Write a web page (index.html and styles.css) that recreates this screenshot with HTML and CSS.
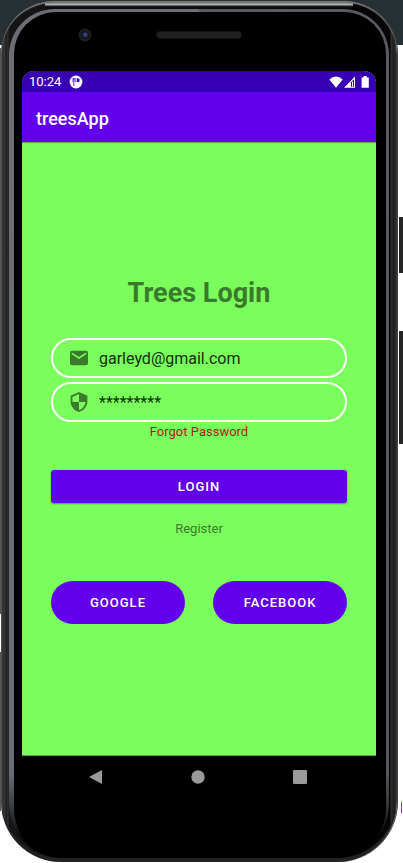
FILE: index.html
```html
<!DOCTYPE html>
<html lang="en">
<head>
<meta charset="utf-8">
<meta name="viewport" content="width=device-width, initial-scale=1">
<title>treesApp</title>
<link rel="stylesheet" href="styles.css">
</head>
<body>
<div class="side-key power-key"></div>
<div class="side-key volume-key"></div>
<div class="caret-mark"></div>
<div class="phone">
  <div class="ring">
    <div class="glass">
      <div class="bezel">
        <svg class="camera" width="14" height="14" viewBox="0 0 14 14" aria-hidden="true">
          <circle cx="7" cy="7" r="6.5" fill="#1d1e20"/>
          <circle cx="7" cy="7" r="4" fill="#10131f"/>
          <circle cx="7" cy="7" r="2.8" fill="#262d52"/>
          <circle cx="7.5" cy="6.5" r="1.2" fill="#46548a"/>
        </svg>
        <div class="speaker"></div>
      </div>
      <div class="screen">
        <div class="status">
          <span>10:24</span>
          <svg class="notice" width="14" height="14" viewBox="0 0 14 14" aria-hidden="true">
            <circle cx="7" cy="7" r="6.4" fill="#fff"/>
            <path d="M3.600 3.300h2.900v3.900h-1v3.400H4.300V7.200h-.7zM7.700 3.300h1.100a1.900 1.900 0 0 1 0 3.800H7.700z" fill="#3700b3"/>
            <path d="M4.700 4.300h.9v5h-.9z" fill="#fff"/>
          </svg>
          <svg class="signals" width="42" height="14" viewBox="0 0 42 14" aria-hidden="true">
            <path d="M.3 4.400Q7 -1.300 13.700 4.400L7 12.800z" fill="#fff"/>
            <path d="M15 12.800 26 1.600v11.200z" fill="#fff"/>
            <path d="M22 7.200 25 4.200v7.600h-3z" fill="#3700b3"/>
            <path d="M23 6.700h1v5.100h-1z" fill="#fff"/>
            <path d="M32.600 2.500h2V1h3.200v1.500h2v10.300h-7.200z" fill="#fff"/>
          </svg>
        </div>
        <header class="appbar">treesApp</header>
        <main class="content">
          <h1>Trees Login</h1>
          <form>
            <label class="field">
              <svg width="20" height="20" viewBox="0 0 20 20" role="img" aria-label="Email"><path d="M3 2.700h14a2 2 0 0 1 2 2v10.600a2 2 0 0 1-2 2H3a2 2 0 0 1-2-2V4.700a2 2 0 0 1 2-2zM2.800 4.600v1.700L10 10.900l7.200-4.600V4.600L10 9.100z"/></svg>
              <input type="email" value="garleyd@gmail.com">
            </label>
            <label class="field">
              <svg width="20" height="20" viewBox="2 2 20 20" role="img" aria-label="Password"><path d="M12 2 3.600 5.700v5.600c0 5.200 3.600 9.500 8.400 10.700 4.800-1.200 8.400-5.500 8.400-10.700V5.700zm0 10h6.500c-.5 3.800-3 7-6.500 8.100V12H5.500V6.900L12 4z"/></svg>
              <input type="text" value="*********" autocomplete="off">
            </label>
            <a class="forgot" href="#">Forgot Password</a>
            <button class="login" type="submit">LOGIN</button>
            <a class="register" href="#">Register</a>
            <div class="social">
              <button type="button">GOOGLE</button>
              <button type="button">FACEBOOK</button>
            </div>
          </form>
        </main>
      </div>
      <nav class="navbar">
        <button type="button" aria-label="Back"><svg width="16" height="16" viewBox="0 0 16 16"><path d="M1 8 14 1v14z"/></svg></button>
        <button type="button" aria-label="Home"><svg width="16" height="16" viewBox="0 0 16 16"><circle cx="8" cy="8" r="6.7"/></svg></button>
        <button type="button" aria-label="Overview"><svg width="16" height="16" viewBox="0 0 16 16"><rect x="1" y="1" width="14" height="14" rx="1.200"/></svg></button>
      </nav>
    </div>
  </div>
</div>
</body>
</html>
```
FILE: styles.css
```css
* { box-sizing: border-box; }

body {
  margin: 0;
  min-height: 100vh;
  padding: 1px 6px 1px 1px;
  display: flex;
  position: relative;
  overflow: hidden;
  background:
    linear-gradient(#fff, #fff) 0 614px / 1px 38px no-repeat,
    linear-gradient(#263035 45px, #fff 45px, #fff 48px, #555 48px, #555 811px, #fff 811px) 0 0 / 1px 100% no-repeat,
    linear-gradient(#263035 45px, #fff 45px);
  font-family: Roboto, "Liberation Sans", sans-serif;
}

.side-key {
  position: absolute;
  right: 0;
  width: 4px;
  background: #262626;
}
.power-key { top: 217px; height: 56px; }
.volume-key { top: 331px; height: 113px; }
.caret-mark {
  position: absolute;
  right: 1px;
  top: 802px;
  width: 1px;
  height: 11px;
  background: #9b2fae;
}

.phone {
  flex: 1;
  display: flex;
  position: relative;
  padding: 8px 8px 4px 8px;
  border-radius: 52px 52px 60px 60px;
  background:
    linear-gradient(#555 0, #666 2px, #c4c8c8 3px, #a0a4a4 4px, #222 5px, #050505 7px, transparent 8px) 50% 0 / calc(100% - 88px) 9px no-repeat,
    linear-gradient(90deg, #555 0, #2c2c2c 2px, #3a3a3a 4px, #181818 5px, #333 7px, #151515 8px, #111 50%, #050505 calc(100% - 8px), #050505 calc(100% - 7px), #303030 calc(100% - 6px), #1c1c1c calc(100% - 3px), #333 calc(100% - 1px), #222 100%);
  box-shadow: inset 0 2px 1px #777, inset 0 -4px 0 #222, 1px 0 0 #444;
}

.ring {
  flex: 1;
  display: flex;
  padding: 3px 3px 0 5px;
  border-radius: 46px 46px 54px 54px;
  background:
    linear-gradient(#5a5a60 0, #56565c 90%, #333 94%, #000 98%) 100% 0 / 50% 100% no-repeat,
    linear-gradient(#6d6d75 0, #686c75 90%, #3a3d42 94%, #000 98%);
}

.glass {
  flex: 1;
  display: flex;
  flex-direction: column;
  padding: 0 10px 0 8px;
  border-radius: 42px 42px 50px 50px;
  background: #000;
}

.bezel {
  height: 59px;
  display: grid;
  grid-template-columns: 1fr auto 1fr;
  align-items: start;
  padding-top: 16px;
}
.camera { margin-left: 56px; }
.speaker {
  width: 86px;
  height: 8px;
  margin-top: 3px;
  border-radius: 4px;
  background: #202222;
  border: 1px solid #151515;
}

.screen {
  flex: 1;
  display: flex;
  flex-direction: column;
  overflow: hidden;
  border-radius: 12px 12px 0 0;
  background: #7aff5c;
  border-bottom: 1px solid #4ba336;
}

.status {
  height: 21px;
  display: flex;
  align-items: center;
  padding: 0 5px 0 7px;
  background: #3700b3;
  color: #fff;
  font-size: 13px;
}
.notice { margin-left: 8px; }
.signals { margin-left: auto; }

.appbar {
  height: 50px;
  display: flex;
  align-items: center;
  padding: 2px 14px 0;
  background: #6200ee;
  color: #fff;
  font-size: 18px;
  font-weight: 500;
  box-shadow: 0 1px 1px #5cb04c;
}

.content {
  flex: 1;
  padding: 133px 29px 0;
}

h1 {
  margin: 0 0 27px;
  line-height: 36px;
  text-align: center;
  font-size: 27px;
  font-weight: 700;
  color: #3a7a2c;
}

form {
  display: flex;
  flex-direction: column;
}

.field {
  height: 40px;
  display: flex;
  align-items: center;
  gap: 10px;
  margin-bottom: 4px;
  padding: 0 16px;
  border: 2px solid #fff;
  border-radius: 20px;
}
.field svg { flex: none; fill: #3a7a2c; }
.field input {
  flex: 1;
  min-width: 0;
  padding: 2px 0 0;
  border: 0;
  outline: 0;
  background: none;
  font: 400 16px/20px Roboto, "Liberation Sans", sans-serif;
  color: #103008;
}

a {
  align-self: center;
  font-size: 13px;
  line-height: 16px;
  text-decoration: none;
}
.forgot { color: #b01818; margin-top: -2px; }
.register { color: #3a7a2c; margin: 18px 0 44px; }

button {
  padding: 0;
  border: 0;
  background: #6200ee;
  color: #fff;
  font: 500 13px/16px Roboto, "Liberation Sans", sans-serif;
  letter-spacing: 1px;
}
.login {
  height: 33px;
  margin-top: 30px;
  border-radius: 3px;
  box-shadow: 0 1px 2px rgba(0, 0, 0, .4);
}
.social { display: flex; gap: 28px; }
.social button {
  flex: 1;
  height: 43px;
  border-radius: 22px;
}

.navbar {
  height: 102px;
  display: flex;
  justify-content: space-between;
  align-items: flex-start;
  padding: 13px 68px 0 66px;
}
.navbar button { height: 16px; background: none; }
.navbar svg { display: block; fill: #9a9a9a; }
```
